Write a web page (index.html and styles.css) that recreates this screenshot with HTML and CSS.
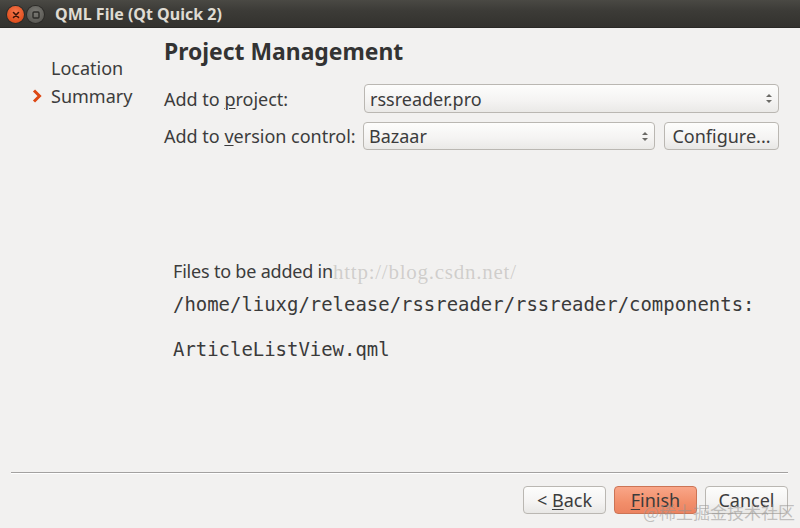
FILE: index.html
```html
<!DOCTYPE html>
<html>
<head>
<meta charset="utf-8">
<link rel="stylesheet" href="styles.css">
</head>
<body>
<div class="window">
  <div class="titlebar">
    <span class="wbtn close"><svg width="16" height="16" viewBox="0 0 16 16"><path d="M5.5 5.5 L10.5 10.5 M10.5 5.5 L5.5 10.5" stroke="#3a1408" stroke-width="1.6" stroke-linecap="round"/></svg></span>
    <span class="wbtn mini"><svg width="16" height="16" viewBox="0 0 16 16"><rect x="5" y="5" width="6" height="6" rx="1" fill="none" stroke="#2c2b28" stroke-width="1.4"/></svg></span>
    <span class="title">QML File (Qt Quick 2)</span>
  </div>
  <div class="content">
    <nav class="steps">
      <div class="step">Location</div>
      <div class="step current"><svg class="chev" width="12" height="16" viewBox="0 0 12 16"><path d="M3 2.5 L8.5 8 L3 13.5" fill="none" stroke="#dd4814" stroke-width="3" stroke-linejoin="miter"/></svg>Summary</div>
    </nav>
    <main class="page">
      <h1>Project Management</h1>
      <div class="form">
        <label class="lbl">Add to <u>p</u>roject:</label>
        <div class="combo wide"><span>rssreader.pro</span><span class="arrows"><i class="up"></i><i class="down"></i></span></div>
        <label class="lbl">Add to <u>v</u>ersion control:</label>
        <div class="ctrlrow">
          <div class="combo narrow"><span>Bazaar</span><span class="arrows"><i class="up"></i><i class="down"></i></span></div>
          <button class="btn conf">Configure...</button>
        </div>
      </div>
      <div class="files">
        <p class="files-lbl">Files to be added in</p>
        <p class="mono path">/home/liuxg/release/rssreader/rssreader/components:</p>
        <p class="mono file">ArticleListView.qml</p>
        <span class="wm-url">http://blog.csdn.net/</span>
      </div>
    </main>
  </div>
  <footer class="footer">
    <div class="sep"></div>
    <div class="buttons">
      <button class="btn">&lt; <u>B</u>ack</button>
      <button class="btn primary"><u>F</u>inish</button>
      <button class="btn">Cancel</button>
    </div>
    <span class="wm-jj">@稀土掘金技术社区</span>
  </footer>
</div>
</body>
</html>
```
FILE: styles.css
```css
* { box-sizing: border-box; }
html, body { margin: 0; padding: 0; }
body {
  width: 800px;
  height: 528px;
  overflow: hidden;
  background: #f2f1f0;
  font-family: "Noto Sans", "Open Sans", sans-serif;
  color: #3c3c3c;
}
.window {
  display: flex;
  flex-direction: column;
  height: 528px;
}
.titlebar {
  height: 28px;
  flex: none;
  display: flex;
  align-items: center;
  padding-left: 7px;
  background: linear-gradient(#4a4944, #3c3b37 40%, #33322e);
  border-bottom: 1px solid #2a2926;
}
.wbtn {
  width: 17px;
  height: 17px;
  border-radius: 50%;
  display: flex;
  align-items: center;
  justify-content: center;
  margin-top: 2px;
}
.wbtn svg { display: block; }
.close {
  background: radial-gradient(circle at 50% 35%, #f7774d, #e0501f 70%, #c4401a);
  box-shadow: 0 0 0 1px #2c2b28;
}
.mini {
  margin-left: 3px;
  background: radial-gradient(circle at 50% 35%, #7b7a75, #5d5c57 70%, #4f4e4a);
  box-shadow: 0 0 0 1px #2c2b28;
}
.title {
  margin-left: 11px;
  margin-top: 1px;
  font-weight: bold;
  font-size: 16px;
  color: #dfdbd2;
}
.content {
  flex: 1;
  display: flex;
}
.steps {
  width: 164px;
  flex: none;
  padding-top: 26px;
}
.step {
  height: 28px;
  line-height: 28px;
  font-size: 18px;
  padding-left: 51px;
  color: #3c3c3c;
  position: relative;
}
.chev {
  position: absolute;
  left: 31px;
  top: 6px;
}
.page {
  flex: 1;
  padding-top: 9px;
  position: relative;
}
h1 {
  margin: 0;
  font-size: 22.9px;
  line-height: 30px;
  font-weight: bold;
  color: #333;
}
.form {
  margin-top: 17px;
  display: grid;
  grid-template-columns: 199px 1fr;
  row-gap: 9px;
  align-items: center;
  padding-right: 21px;
}
.lbl {
  font-size: 18px;
  color: #3c3c3c;
}
u { text-decoration-thickness: 1px; text-underline-offset: 2px; }
.combo {
  height: 29px;
  border: 1px solid #bab7b2;
  border-radius: 4px;
  background: linear-gradient(#fdfdfc, #f4f3f2 60%, #eae9e7);
  display: flex;
  align-items: center;
  justify-content: space-between;
  padding: 0 6px 0 5px;
  font-size: 18px;
  color: #3c3c3c;
}
.combo.wide { margin-left: 1px; }
.ctrlrow {
  display: flex;
  gap: 9px;
}
.combo.narrow { width: 292px; height: 28px; }
.arrows {
  display: flex;
  flex-direction: column;
  gap: 3px;
  align-items: center;
}
.arrows i {
  display: block;
  width: 0;
  height: 0;
  border-left: 3px solid transparent;
  border-right: 3px solid transparent;
}
.arrows .up { border-bottom: 3px solid #6b6a66; }
.arrows .down { border-top: 3px solid #6b6a66; }
.btn {
  height: 28px;
  border: 1px solid #bab7b2;
  border-radius: 4px;
  background: linear-gradient(#fdfdfc, #f4f3f2 60%, #e8e7e5);
  font-family: "Noto Sans", "Open Sans", sans-serif;
  font-size: 18px;
  color: #3c3c3c;
  padding: 0;
}
.conf { width: 115px; }
.files {
  margin-top: 110px;
  padding-left: 9px;
  position: relative;
}
.files p { margin: 0; }
.files .files-lbl {
  font-size: 18px;
  line-height: 22px;
  color: #3c3c3c;
  letter-spacing: -0.2px;
}
.files .mono {
  font-family: "DejaVu Sans Mono", "Liberation Mono", monospace;
  font-size: 18.95px;
  line-height: 24px;
  color: #3a3a3a;
}
.files .path { margin-top: 10px; }
.files .file { margin-top: 21px; }
.wm-url {
  position: absolute;
  left: 169px;
  top: 0px;
  font-family: "Liberation Serif", serif;
  font-size: 21px;
  color: rgba(160, 156, 152, 0.42);
  letter-spacing: 0.75px;
}
.footer {
  height: 56px;
  flex: none;
  padding: 0 12px 0 11px;
  position: relative;
}
.sep {
  height: 2px;
  border-top: 1px solid #a3a1a0;
  border-bottom: 1px solid #ffffff;
}
.buttons {
  display: flex;
  justify-content: flex-end;
  gap: 8px;
  padding-top: 12px;
}
.buttons .btn { width: 83px; }
.btn.primary {
  background: linear-gradient(#f9a688, #f28e6a 60%, #ec8360);
  border-color: #cc7455;
  color: #3c3c3c;
}
.wm-jj {
  position: absolute;
  right: 5px;
  bottom: 4px;
  font-family: "Noto Sans CJK SC", sans-serif;
  font-size: 17px;
  color: rgba(150, 148, 146, 0.55);
}
```
